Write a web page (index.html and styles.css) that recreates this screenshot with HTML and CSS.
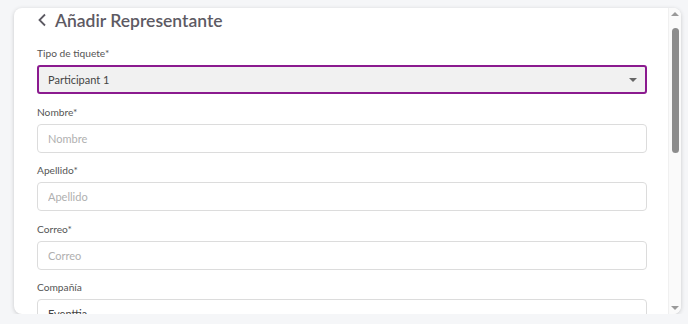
FILE: index.html
```html
<!DOCTYPE html>
<html lang="es">
<head>
    <meta charset="UTF-8">
    <meta name="viewport" content="width=device-width, initial-scale=1.0">
    <title>Añadir Representante</title>
    <link rel="stylesheet" href="styles.css">
</head>
<body>

<div class="card">
    <form class="card-body" id="Form">
        <div class="header">
            <svg class="back" width="10" height="14" viewBox="0 0 10 14">
                <path d="M8 1.5 L2.5 7 L8 12.5" fill="none" stroke="#5d5a63" stroke-width="1.8"/>
            </svg>
            <h1 class="title">Añadir Representante</h1>
        </div>

        <div class="field">
            <label class="field-label">Tipo de tiquete*</label>
            <div class="select">
                <span>Participant 1</span>
                <span class="caret"></span>
            </div>
        </div>

        <div class="field">
            <label class="field-label">Nombre*</label>
            <input class="input" type="text" placeholder="Nombre">
        </div>

        <div class="field">
            <label class="field-label">Apellido*</label>
            <input class="input" type="text" placeholder="Apellido">
        </div>

        <div class="field">
            <label class="field-label">Correo*</label>
            <input class="input" type="text" placeholder="Correo">
        </div>

        <div class="field">
            <label class="field-label">Compañía</label>
            <input class="input filled" type="text" value="Eventtia">
        </div>
    </form>

    <div class="scrollbar">
        <span class="arrow-up"></span>
        <span class="thumb"></span>
        <span class="arrow-down"></span>
    </div>
</div>

</body>
</html>
```

FILE: styles.css
```css
body {
    margin: 0;
    padding: 8px 7px 0 14px;
    background-color: #f5f6f8;
    font-family: Lato, "Liberation Sans", sans-serif;
}

.card {
    display: flex;
    width: 667px;
    height: 306px;
    background-color: white;
    border-radius: 8px;
    box-shadow: 0 1px 4px rgba(0, 0, 0, 0.18);
    overflow: hidden;
}

.card-body {
    flex: 1;
    padding: 0 21px 0 23px;
    overflow: hidden;
}

.header {
    display: flex;
    align-items: center;
    height: 24px;
    margin-bottom: 14px;
}

.back {
    margin-right: 8px;
}

.title {
    margin: 0;
    font-size: 17.5px;
    font-weight: 600;
    color: #5d5a63;
}

.field {
    margin-bottom: 10.5px;
}

.field-label {
    display: block;
    font-size: 10.2px;
    line-height: 14px;
    color: #555;
    margin-bottom: 5px;
}

.select {
    display: flex;
    align-items: center;
    justify-content: space-between;
    height: 29px;
    padding: 0 8px 0 9px;
    border: 2px solid #8b1a8f;
    border-radius: 3px;
    background-color: #f1f1f1;
    box-sizing: border-box;
    font-size: 11px;
    color: #444;
}

.caret {
    width: 0;
    height: 0;
    border-left: 4px solid transparent;
    border-right: 4px solid transparent;
    border-top: 4px solid #666;
}

.input {
    display: block;
    width: 100%;
    height: 29px;
    padding: 0 10px;
    border: 1px solid #dcdcdc;
    border-radius: 4px;
    box-sizing: border-box;
    font-family: inherit;
    font-size: 11px;
    color: #444;
    outline: none;
}

.input::placeholder {
    color: #b0b0b0;
}

.scrollbar {
    display: flex;
    flex-direction: column;
    align-items: center;
    width: 12px;
    background-color: #fafafa;
    border-left: 1px solid #f0f0f0;
}

.arrow-up {
    margin-top: 4px;
    width: 0;
    height: 0;
    border-left: 4px solid transparent;
    border-right: 4px solid transparent;
    border-bottom: 4px solid #999;
}

.thumb {
    margin-top: 12px;
    width: 7px;
    height: 125px;
    border-radius: 4px;
    background-color: #8c8c8c;
}

.arrow-down {
    margin-top: auto;
    margin-bottom: 4px;
    width: 0;
    height: 0;
    border-left: 4px solid transparent;
    border-right: 4px solid transparent;
    border-top: 4px solid #999;
}
```
